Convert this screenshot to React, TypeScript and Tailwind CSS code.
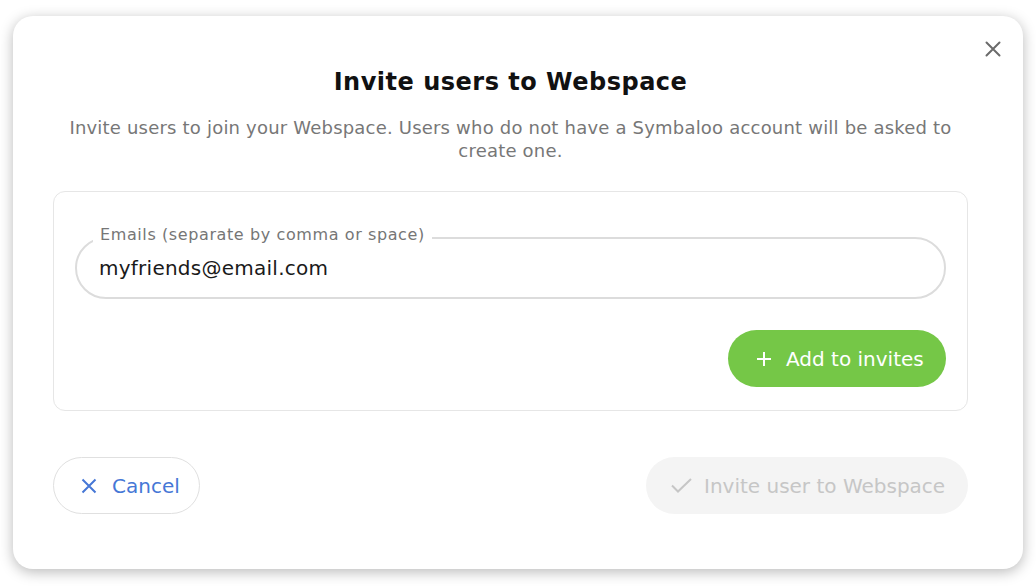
import React from "react";

const font = { fontFamily: "'DejaVu Sans', sans-serif" };

export default function App() {
  return (
    <div className="w-[1036px] h-[586px] bg-white pt-[16px] pl-[13px]" style={font}>
      <div className="relative w-[1010px] h-[553px] bg-white rounded-[20px] shadow-[0_3px_14px_rgba(0,0,0,0.28)] pl-[40px] pr-[55px] pt-[50px] flex flex-col">
        <button className="absolute top-[25px] right-[22px] w-[16px] h-[16px] flex items-center justify-center">
          <svg width="16" height="16" viewBox="0 0 16 16" fill="none" stroke="#6b6b6b" strokeWidth="2" strokeLinecap="round">
            <path d="M1.5 1.5 L14.5 14.5 M14.5 1.5 L1.5 14.5" />
          </svg>
        </button>
        <h1 className="text-center text-[24px] leading-[32px] font-bold text-[#111] tracking-[0.5px]">Invite users to Webspace</h1>
        <p className="mt-[18px] text-center text-[18px] leading-[23px] tracking-[0.2px] text-[#777] px-[10px]">
          Invite users to join your Webspace. Users who do not have a Symbaloo account will be asked to create one.
        </p>
        <div className="mt-[29px] border border-[#e6e6e6] rounded-[12px] pt-[45px] pb-[23px] px-[21px] flex flex-col">
          <div className="relative h-[62px] border-2 border-[#dcdcdc] rounded-full flex items-center pl-[22px]">
            <span className="absolute left-[16px] top-[-13px] bg-white px-[7px] text-[16px] leading-[18px] tracking-[0.6px] text-[#767676]">
              Emails (separate by comma or space)
            </span>
            <span className="text-[20px] tracking-[0.25px] text-[#1a1a1a]">myfriends@email.com</span>
          </div>
          <div className="mt-[31px] flex justify-end">
            <button className="w-[218px] h-[57px] rounded-full bg-[#75c747] flex items-center pl-[28px] gap-[14px] text-white text-[20px]">
              <svg width="16" height="16" viewBox="0 0 16 16" fill="none" stroke="white" strokeWidth="2">
                <path d="M8 1 V15 M1 8 H15" />
              </svg>
              <span>Add to invites</span>
            </button>
          </div>
        </div>
        <div className="mt-[46px] flex justify-between">
          <button className="w-[147px] h-[57px] rounded-full border border-[#e0e0e0] bg-white flex items-center pl-[27px] gap-[15px] text-[20px] text-[#4677d6]">
            <svg width="16" height="16" viewBox="0 0 16 16" fill="none" stroke="#4677d6" strokeWidth="2">
              <path d="M1.5 1.5 L14.5 14.5 M14.5 1.5 L1.5 14.5" />
            </svg>
            <span>Cancel</span>
          </button>
          <button className="w-[322px] h-[57px] rounded-full bg-[#f4f4f4] flex items-center pl-[25px] gap-[12px] text-[20px] text-[#c6c6c6]">
            <svg width="21" height="15" viewBox="0 0 21 15" fill="none" stroke="#c6c6c6" strokeWidth="2">
              <path d="M1 7.5 L7 13.5 L20 1" />
            </svg>
            <span>Invite user to Webspace</span>
          </button>
        </div>
      </div>
    </div>
  );
}
